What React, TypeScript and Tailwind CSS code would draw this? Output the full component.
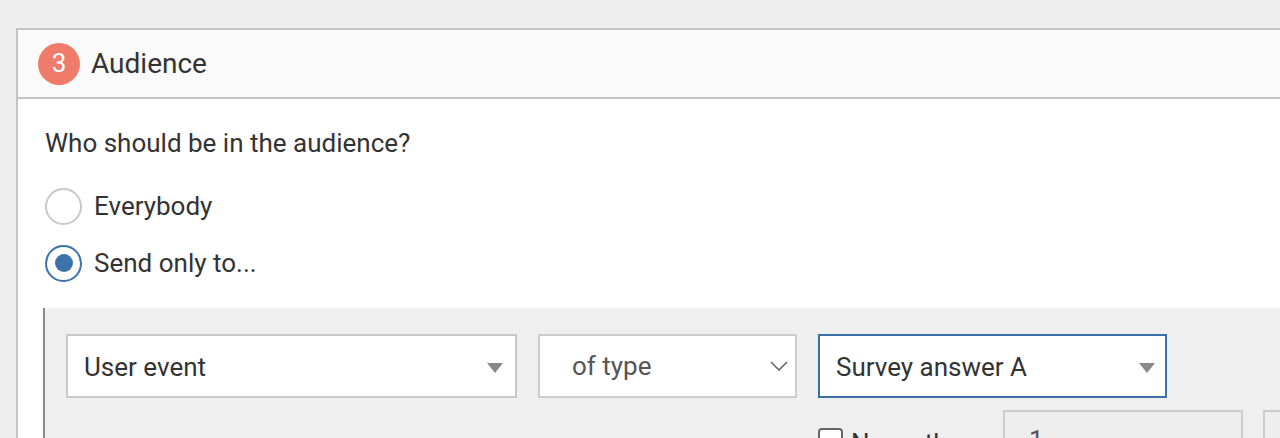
import React from "react";

const Tri = () => (
  <svg width="16" height="10" viewBox="0 0 16 10" className="shrink-0">
    <path d="M0 0 H16 L8 10 Z" fill="#888888" />
  </svg>
);

const Chev = () => (
  <svg width="18" height="10" viewBox="0 0 18 10" className="shrink-0">
    <path d="M1 1 L9 9 L17 1" fill="none" stroke="#666666" strokeWidth="1.6" />
  </svg>
);

export default function App() {
  return (
    <div
      className="h-[438px] w-[1280px] overflow-hidden bg-[#eeeeee] pt-[28px] pl-[16px]"
      style={{ fontFamily: "Roboto, 'Liberation Sans', sans-serif" }}
    >
      <div className="w-[1320px] border-l-2 border-t-2 border-[#c4c4c4] bg-white">
        <div className="flex h-[69px] items-center gap-[11px] border-b-2 border-[#c4c4c4] bg-[#fafafa] pl-[20px]">
          <div className="flex h-[42px] w-[42px] items-center justify-center rounded-full bg-[#ef7b6b] text-[26px] text-white">
            3
          </div>
          <div className="text-[28px] text-[#333333]">Audience</div>
        </div>
        <div className="pl-[25px] pt-[29px]">
          <div className="pl-[2px] text-[26px] leading-[30px] text-[#333333]">Who should be in the audience?</div>
          <div className="mt-[28px] flex h-[40px] items-center gap-[12px] pl-[2px]">
            <div className="h-[37px] w-[37px] rounded-full border-2 border-[#c8c8c8] bg-white" />
            <div className="text-[26px] text-[#333333]">Everybody</div>
          </div>
          <div className="mt-[17px] flex h-[40px] items-center gap-[12px] pl-[2px]">
            <div className="flex h-[37px] w-[37px] items-center justify-center rounded-full border-2 border-[#3d72ad] bg-white">
              <div className="h-[18px] w-[18px] rounded-full bg-[#3d72ad]" />
            </div>
            <div className="text-[26px] text-[#333333]">Send only to...</div>
          </div>
          <div className="mt-[25px] h-[200px] border-l-2 border-[#8a8a8a] bg-[#efefef] pl-[21px] pt-[26px]">
            <div className="flex gap-[21px]">
              <div className="flex h-[64px] w-[451px] shrink-0 items-center justify-between border-2 border-[#c8c8c8] bg-white pl-[16px] pr-[12px] pt-[3px] text-[26px] text-[#333333]">
                <span>User event</span>
                <Tri />
              </div>
              <div className="flex h-[64px] w-[259px] shrink-0 items-center justify-between border-2 border-[#cccccc] bg-white pl-[32px] pr-[7px] text-[26px] text-[#555555]">
                <span>of type</span>
                <Chev />
              </div>
              <div className="flex h-[64px] w-[349px] shrink-0 items-center justify-between border-2 border-[#3d6fa7] bg-white pl-[16px] pr-[10px] pt-[3px] text-[26px] text-[#333333]">
                <span>Survey answer A</span>
                <Tri />
              </div>
            </div>
            <div className="mt-[12px] flex items-start">
              <div className="ml-[752px] mt-[18px] flex w-[185px] shrink-0 items-start gap-[8px]">
                <div className="h-[25px] w-[25px] shrink-0 rounded-[4px] border-2 border-[#666666] bg-white" />
                <span className="whitespace-nowrap text-[26px] leading-[30px] text-[#333333]">Never the</span>
              </div>
              <div className="flex h-[60px] w-[240px] shrink-0 items-center border-2 border-[#cccccc] bg-[#eeeeee] pl-[24px] text-[26px] text-[#555555]">
                1
              </div>
              <div className="ml-[20px] h-[60px] w-[100px] shrink-0 border-2 border-[#cccccc] bg-[#eeeeee]" />
            </div>
          </div>
        </div>
      </div>
    </div>
  );
}
